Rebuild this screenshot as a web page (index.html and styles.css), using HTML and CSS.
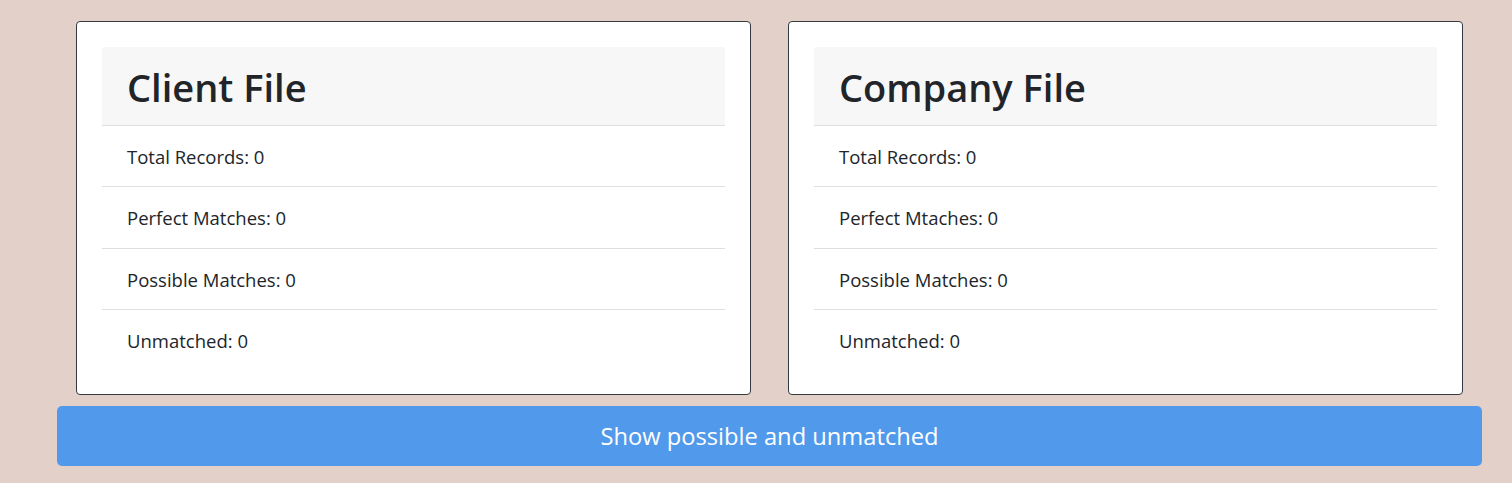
FILE: index.html
```html
<!DOCTYPE html>
<html lang="en">
<head>
<meta charset="utf-8">
<title>Match summary</title>
<link rel="stylesheet" href="styles.css">
</head>
<body>
<main class="page">
  <div class="cards">
    <section class="card">
      <div class="card-header"><h1>Client File</h1></div>
      <ul class="list">
        <li>Total Records: 0</li>
        <li>Perfect Matches: 0</li>
        <li>Possible Matches: 0</li>
        <li>Unmatched: 0</li>
      </ul>
    </section>
    <section class="card">
      <div class="card-header"><h1>Company File</h1></div>
      <ul class="list">
        <li>Total Records: 0</li>
        <li>Perfect Mtaches: 0</li>
        <li>Possible Matches: 0</li>
        <li>Unmatched: 0</li>
      </ul>
    </section>
  </div>
  <button class="btn" type="button">Show possible and unmatched</button>
</main>
</body>
</html>
```

FILE: styles.css
```css
html, body {
  margin: 0;
  padding: 0;
}
body {
  background: #e3d1c9;
  font-family: "Open Sans", "Noto Sans", sans-serif;
  color: #212529;
  height: 483px;
  overflow: hidden;
}
.page {
  width: 1425px;
  margin-left: 57px;
  padding-top: 21px;
  display: flex;
  flex-direction: column;
  gap: 11px;
}
.cards {
  display: flex;
  gap: 37px;
  padding: 0 19px;
}
.card {
  flex: 1;
  background: #fff;
  border: 1px solid #343a40;
  border-radius: 4px;
  padding: 25px;
  box-sizing: content-box;
  height: 322px;
}
.card-header {
  background: #f7f7f7;
  border-bottom: 1px solid #dfdfdf;
  border-radius: 3px 3px 0 0;
  padding: 16px 25px 14px;
}
.card-header h1 {
  margin: 0;
  font-size: 38px;
  line-height: 48px;
  font-weight: 600;
}
.list {
  list-style: none;
  margin: 0;
  padding: 0;
}
.list li {
  font-size: 18.5px;
  line-height: 28.33px;
  padding: 17px 25px 15px;
  border-bottom: 1px solid #dfdfdf;
}
.list li:last-child {
  border-bottom: none;
}
.btn {
  display: block;
  width: 100%;
  height: 60px;
  border: none;
  border-radius: 5px;
  background: #519aeb;
  color: #fff;
  font-family: inherit;
  font-size: 23.7px;
  cursor: pointer;
}
```
